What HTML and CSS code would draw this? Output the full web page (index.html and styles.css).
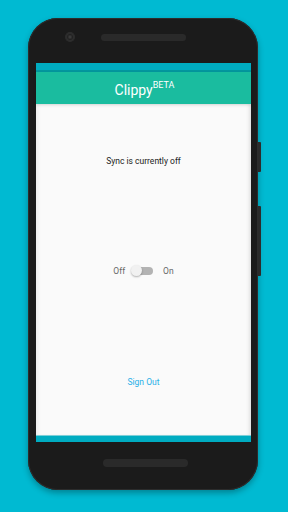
FILE: index.html
```html
<!DOCTYPE html>
<html lang="en">
<head>
    <meta charset="UTF-8">
    <meta name="viewport" content="width=device-width, initial-scale=1.0">
    <title>Clippy</title>
    <link rel="stylesheet" href="styles.css">
</head>
<body>
    <div class="phone">
        <div class="bezel-top">
            <span class="camera"></span>
            <span class="speaker"></span>
        </div>
        <div class="screen">
            <div class="status-bar"></div>
            <div class="app-bar">Clippy<sup>BETA</sup></div>
            <div class="content">
                <p class="sync-text">Sync is currently off</p>
                <div class="toggle-row">
                    <span>Off</span>
                    <span class="switch"><span class="thumb"></span></span>
                    <span>On</span>
                </div>
                <a class="sign-out" href="#">Sign Out</a>
            </div>
            <div class="nav-strip"></div>
        </div>
        <div class="bezel-bottom">
            <span class="speaker"></span>
        </div>
        <span class="side-btn power"></span>
        <span class="side-btn volume"></span>
    </div>
</body>
</html>
```

FILE: styles.css
```css
html, body {
    margin: 0;
    height: 100%;
}
body {
    background-color: #00bad2;
    font-family: Roboto, "Liberation Sans", sans-serif;
    display: flex;
    justify-content: center;
    padding-top: 18px;
    box-sizing: border-box;
}
.phone {
    position: relative;
    width: 230px;
    height: 472px;
    margin-left: -2px;
    padding: 0 7px 0 8px;
    box-sizing: border-box;
    background-color: #1b1b1b;
    border-radius: 30px;
    box-shadow: 0 0 0 1px #2c2c2c inset, 0 3px 6px rgba(0,0,0,0.3);
    display: flex;
    flex-direction: column;
}
.bezel-top {
    height: 45px;
    display: flex;
    align-items: center;
    padding: 0 0 7px 30px;
    box-sizing: border-box;
    gap: 27px;
}
.camera {
    width: 8px;
    height: 8px;
    border-radius: 50%;
    background: radial-gradient(circle, #444 0, #222 45%, #333 70%, #2a2a2a 100%);
    box-shadow: 0 0 0 1px #2e2e2e;
}
.speaker {
    width: 85px;
    height: 7px;
    border-radius: 4px;
    background-color: #2a2a2a;
    background-image: radial-gradient(#1c1c1c 40%, transparent 50%);
    background-size: 2px 2px;
}
.screen {
    height: 379px;
    display: flex;
    flex-direction: column;
    background-color: #fafafa;
}
.status-bar {
    height: 7px;
    background-color: #00acc1;
    border-bottom: 2px solid #04989f;
}
.app-bar {
    height: 32px;
    background-color: #1abc9f;
    color: #fff;
    font-size: 14px;
    display: flex;
    justify-content: center;
    align-items: center;
    padding: 3px 0 0 2px;
    box-sizing: border-box;
    box-shadow: 0 1px 3px rgba(0,0,0,0.15);
    position: relative;
}
.app-bar sup {
    font-size: 9px;
    align-self: flex-start;
    margin-top: 6px;
    line-height: 1;
}
.content {
    flex: 1;
    display: flex;
    flex-direction: column;
    align-items: center;
    box-shadow: inset -4px 0 4px -3px rgba(0,0,0,0.15), inset 4px 0 4px -3px rgba(0,0,0,0.08);
}
.sync-text {
    margin: 52px 0 0;
    font-size: 8.5px;
    color: #222;
}
.toggle-row {
    margin-top: 100px;
    display: flex;
    align-items: center;
    gap: 8px;
    font-size: 8.5px;
    color: #666;
}
.switch {
    position: relative;
    width: 20px;
    height: 8px;
    border-radius: 4px;
    background-color: #b3b3b3;
    margin: 0 2px 0 0;
}
.thumb {
    position: absolute;
    left: -2px;
    top: -2px;
    width: 11px;
    height: 11px;
    border-radius: 50%;
    background-color: #f1f1f1;
    box-shadow: 0 1px 2px rgba(0,0,0,0.3);
}
.sign-out {
    margin-top: 101px;
    font-size: 8.5px;
    color: #29b0e8;
    text-decoration: none;
}
.nav-strip {
    height: 6px;
    background-color: #00acc1;
    border-top: 1px solid #7ccfd8;
}
.bezel-bottom {
    flex: 1;
    display: flex;
    justify-content: center;
    align-items: center;
    padding: 0 0 6px 3px;
}
.bezel-bottom .speaker {
    height: 8px;
}
.side-btn {
    position: absolute;
    right: -3px;
    width: 3px;
    background-color: #2b2b2b;
    border-radius: 0 1px 1px 0;
}
.power {
    top: 124px;
    height: 30px;
}
.volume {
    top: 188px;
    height: 70px;
}
```
